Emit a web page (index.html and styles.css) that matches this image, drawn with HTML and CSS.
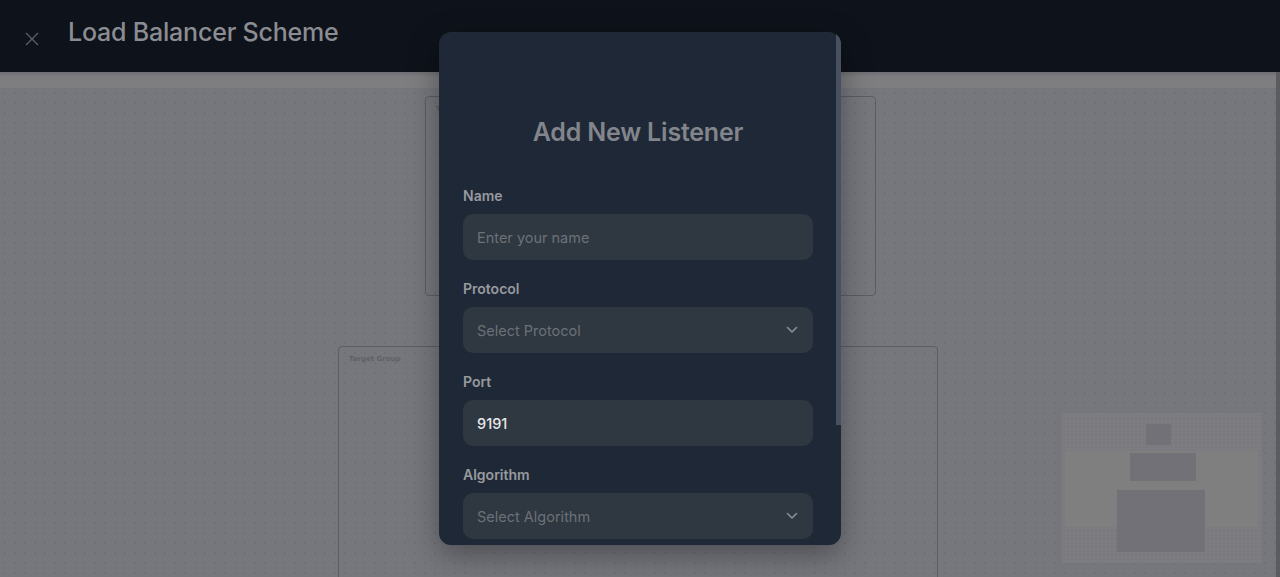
FILE: index.html
```html
<!DOCTYPE html>
<html lang="en">
<head>
  <meta charset="UTF-8">
  <title>Load Balancer Scheme</title>
  <link rel="stylesheet" href="styles.css">
</head>
<body>

  <header class="topbar">
    <button class="close-btn" aria-label="Close">
      <svg width="14" height="14" viewBox="0 0 14 14"><path d="M1 1L13 13M13 1L1 13" stroke="currentColor" stroke-width="1.4" fill="none"/></svg>
    </button>
    <h1>Load Balancer Scheme</h1>
  </header>

  <main class="workspace">
    <div class="band"></div>
    <div class="canvas">
      <div class="node node-lb"><span class="node-title">Target Group</span></div>
      <div class="node node-tg"><span class="node-title">Target Group</span></div>

      <div class="minimap">
        <div class="mm-row"></div>
        <div class="mm a"></div>
        <div class="mm b"></div>
        <div class="mm c"></div>
      </div>
    </div>
    <div class="page-scroll"></div>
  </main>

  <!-- modal -->
  <div class="modal">
    <div class="modal-thumb"></div>
    <h2>Add New Listener</h2>

    <div class="field">
      <label>Name</label>
      <div class="input placeholder">Enter your name</div>
    </div>

    <div class="field">
      <label>Protocol</label>
      <div class="input select placeholder">Select Protocol
        <svg class="chev" width="12" height="8" viewBox="0 0 12 8"><path d="M1.5 1.5L6 6L10.5 1.5" stroke="currentColor" stroke-width="1.6" fill="none" stroke-linecap="round" stroke-linejoin="round"/></svg>
      </div>
    </div>

    <div class="field">
      <label>Port</label>
      <div class="input value">9191</div>
    </div>

    <div class="field">
      <label>Algorithm</label>
      <div class="input select placeholder">Select Algorithm
        <svg class="chev" width="12" height="8" viewBox="0 0 12 8"><path d="M1.5 1.5L6 6L10.5 1.5" stroke="currentColor" stroke-width="1.6" fill="none" stroke-linecap="round" stroke-linejoin="round"/></svg>
      </div>
    </div>
  </div>

</body>
</html>
```

FILE: styles.css
```css
:root {
  --header-bg: #0e121a;
  --muted: #8b8d92;
  --canvas: #76777d;
  --modal-bg: #1f2836;
  --field-bg: #2f3740;
  --placeholder: #6c7178;
}

* { box-sizing: border-box; }

html, body {
  margin: 0;
  height: 100%;
  overflow: hidden;
}

body {
  font-family: Inter, 'Noto Sans', sans-serif;
  background: var(--canvas);
}

.topbar {
  height: 72px;
  background: var(--header-bg);
  display: flex;
  align-items: center;
  padding-left: 25px;
  gap: 29px;
}

.close-btn {
  background: none;
  border: none;
  padding: 0;
  color: #5a5e66;
  display: flex;
  margin-top: 6px;
}

.topbar h1 {
  margin: 0;
  font-size: 25px;
  font-weight: 500;
  letter-spacing: -0.2px;
  color: var(--muted);
  margin-top: -8px;
}

.workspace {
  position: relative;
  height: calc(100% - 72px);
  overflow: hidden;
}

.band {
  height: 16px;
  background: linear-gradient(#6e6f74, #7e7e80 5px);
}

.canvas {
  position: relative;
  height: calc(100% - 16px);
  background-color: var(--canvas);
  background-image: radial-gradient(circle, #6f7076 0.7px, transparent 1px);
  background-size: 10px 10px;
}

.page-scroll {
  position: absolute;
  top: 0;
  right: 0;
  width: 4px;
  height: 100%;
  background: #5b5c60;
}

.node {
  position: absolute;
  border: 1px solid #5c5d62;
  border-radius: 4px;
}

.node-title {
  display: block;
  padding: 8px 0 0 10px;
  font-family: 'DejaVu Sans', sans-serif;
  font-size: 7px;
  font-weight: bold;
  color: #5f6065;
}

.node-lb { left: 425px; top: 8px; width: 451px; height: 200px; }
.node-tg { left: 338px; top: 258px; width: 600px; height: 240px; }

.minimap {
  position: absolute;
  left: 1062px;
  top: 325px;
  width: 200px;
  height: 150px;
  background-color: #7d7d81;
  background-image: radial-gradient(circle, #77777b 0.6px, transparent 0.9px);
  background-size: 4px 4px;
}

.mm-row {
  position: absolute;
  left: 3px;
  right: 4px;
  top: 38px;
  height: 76px;
  background: #7f7f80;
}

.mm {
  position: absolute;
  background: #717177;
}

.mm.a { left: 84px; top: 11px; width: 25px; height: 21px; }
.mm.b { left: 68px; top: 40px; width: 66px; height: 28px; }
.mm.c { left: 55px; top: 77px; width: 88px; height: 62px; }

/* modal */
.modal {
  position: absolute;
  left: 439px;
  top: 32px;
  width: 402px;
  height: 513px;
  background: var(--modal-bg);
  border-radius: 12px;
  padding: 84px 28px 0 24px;
  overflow: hidden;
  box-shadow: 0 10px 30px rgba(0, 0, 0, 0.35);
}

.modal-thumb {
  position: absolute;
  top: 0;
  right: 0;
  width: 5px;
  height: 393px;
  background: #475161;
}

.modal h2 {
  margin: 0 0 38px;
  text-align: center;
  font-size: 25px;
  line-height: 32px;
  font-weight: 600;
  letter-spacing: -0.2px;
  color: #82858b;
}

.field { margin-bottom: 19px; }

.field label {
  display: block;
  font-size: 14px;
  line-height: 20px;
  font-weight: 600;
  color: #979a9f;
  margin-bottom: 8px;
}

.input {
  height: 46px;
  background: var(--field-bg);
  border-radius: 10px;
  display: flex;
  align-items: center;
  padding: 0 14px;
  font-size: 14.5px;
}

.placeholder { color: var(--placeholder); }

.value {
  color: #e6e7ea;
  font-weight: 500;
}

.select { justify-content: space-between; }

.chev {
  color: #8a8e94;
  margin-right: 1px;
}
```
